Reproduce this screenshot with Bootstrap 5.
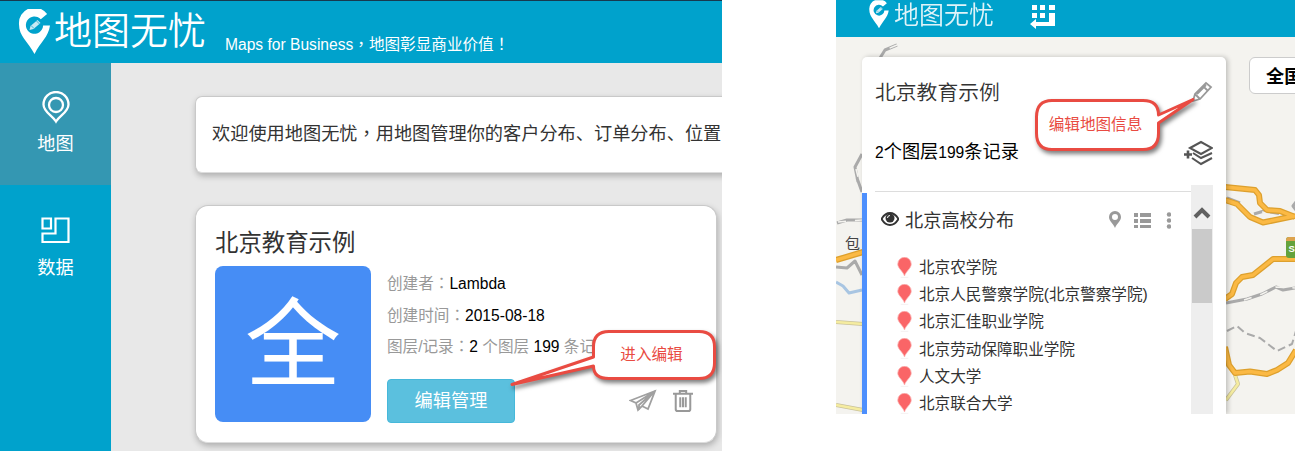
<!DOCTYPE html>
<html lang="zh-CN">
<head>
<meta charset="utf-8">
<meta name="viewport" content="width=device-width, initial-scale=1">
<title>地图无忧</title>
<link rel="stylesheet" href="https://cdn.jsdelivr.net/npm/bootstrap@5.3.0/dist/css/bootstrap.min.css">
<style>
  body { font-family: "Liberation Sans", "Noto Sans CJK SC", sans-serif; font-size: 15.6px; line-height: 1; color: #333; background: #fff; height: 451px; overflow: hidden; }
  svg { display: block; flex: none; }
  .tc { font-family: "Liberation Sans", "Noto Sans CJK TC", sans-serif; }
  .thin { font-weight: 350; }
  .app { width: 722px; height: 451px; background: #e8e8e8; flex: none; }
  .topbar { height: 63px; background: #00a2cc; border-top: 1px solid #17394f; padding-left: 18px; color: #fff; }
  .brand-name { font-size: 38px; line-height: 61px; margin-left: 3px; }
  .slogan { margin: 28px 0 0 19px; line-height: 32px; }
  .side { width: 111px; background: #00a2cc; color: #fff; font-size: 18.2px; flex: none; }
  .side-item { height: 122px; padding-top: 28px; line-height: 24px; }
  .side-item.on { background: #3497b2; }
  .side-item svg { margin-bottom: 8px; }
  .side-item:not(.on) svg { margin-bottom: 5px; }
  .main { padding: 33px 0 0 84px; min-width: 0; }
  .notice, .mapcard { background: #fff; border: 1px solid #c9c9c9; border-bottom-color: #ddd; box-shadow: 1px 3px 6px rgba(0,0,0,.25); }
  .notice { width: 560px; height: 77px; border-radius: 7px; padding-left: 16px; font-size: 18.2px; line-height: 75px; }
  .mapcard { width: 522px; height: 238px; border-radius: 13px; margin-top: 32px; padding: 23px 19px 0; }
  .map-title { font-size: 23.4px; line-height: 28px; margin-bottom: 9px; }
  .thumb { width: 156px; height: 156px; border-radius: 8px; background: #468df5; color: #fff; font-size: 96px; line-height: 158px; flex: none; }
  .meta { color: #999; line-height: 31.5px; padding-top: 2px; }
  .meta b { font-weight: 400; color: #000; }
  .btn-manage { width: 128px; height: 44px; padding: 0; font-size: 18.2px; line-height: 40px; color: #fff; background: #5bc0de; border: 1px solid #46b8da; border-radius: 4px; }
  .callout { left: 0; top: 0; z-index: 5; }
  .callout-text { color: #e94b42; font-size: 15.6px; line-height: 24px; z-index: 6; }
  .c1 { left: 591px; top: 343px; width: 121px; }
  .c2 { left: 199px; top: 113px; width: 121px; }
  .editor { width: 459px; height: 414px; background: #f4f3ef; margin-left: 114px; flex: none; }
  .editbar { height: 37px; background: #00a2cc; color: #fff; padding-left: 33px; }
  .editbar .brand-name { font-size: 25px; line-height: 30px; margin-left: 5px; opacity: .88; }
  .grid-icon { margin-left: 35px; }
  .map-bg { left: 0; top: 0; }
  .layers { width: 364px; height: 357px; margin: 20px 0 0 26px; background: #fff; border-radius: 5px 5px 0 0; box-shadow: 2px 0 5px rgba(0,0,0,.22); flex: none; }
  .layers-head { height: 128px; padding: 20px 13px 0; }
  .layers-title { font-size: 20.8px; line-height: 31px; }
  .count-row { margin-top: 31px; }
  .count { color: #000; font-size: 18.2px; line-height: 26px; }
  .count b { font-weight: 400; font-size: 15.6px; }
  .pane-body { height: 229px; }
  .stripe { width: 5px; margin-top: 8px; background: #4d8ffd; }
  .records { width: 316px; margin: 6px 0 0 8px; border-top: 1px solid #ddd; }
  .layer-row { height: 58px; padding: 0 20px 0 6px; font-size: 18.2px; }
  .layer-row .tools { margin-bottom: 3px; }
  .layer-row .eye { margin-bottom: 4px; }
  .layer-name { margin-left: 6px; }
  .record { height: 27.25px; padding-left: 22px; gap: 7px; white-space: nowrap; }
  .record svg { margin-top: -1px; }
  .scroller { width: 22px; background: #eee; }
  .scroller i { display: block; width: 20px; height: 74px; background: #cacaca; margin: 0 auto; }
  .region { width: 90px; height: 37px; margin: 20px 0 0 23px; border: 1px solid #ccc; border-radius: 6px; background: #fff; color: #000; font-size: 18.2px; font-weight: 700; padding-left: 16px; line-height: 38px; flex: none; }
</style>
</head>
<body>
<svg width="0" height="0" class="position-absolute">
  <symbol id="logo" viewBox="0 0 32 46">
    <path d="M28.600 5.100A15.500 15.500 0 0 0 .5 15.500C.5 27 9 32 16 45 22 33 30 28 31.500 16.500H24.600A8.600 8.600 0 1 1 22.300 10.300Z" fill="#fff"/>
    <path d="M11 21l1-4 7-6 3 3-7 6z" fill="#c7eaf4"/><path d="M12.500 16.500l3 3M18 12l3 3" stroke="#42b7d7"/>
  </symbol>
  <symbol id="drop" viewBox="0 0 16 22">
    <path d="M8 20C6.500 15 .8 12 .8 7.300a7.200 7.200 0 0 1 14.400 0C15.200 12 9.500 15 8 20Z" fill="#fa6567" stroke="#fbb0b0" stroke-width=".8"/><path d="M4 21.500h8" stroke="#f3f0f0"/>
  </symbol>
</svg>
<div class="d-flex align-items-start">
  <section class="app position-relative overflow-hidden d-flex flex-column">
    <header class="topbar d-flex align-items-start">
      <svg width="33" height="46" class="mt-2" viewBox="0 0 32 46"><use href="#logo"/></svg>
      <div class="brand-name thin text-nowrap">地图无忧</div>
      <div class="slogan text-nowrap">Maps for Business<span class="tc" lang="zh-TW">，</span>地图彰显商业价值<span class="tc" lang="zh-TW">！</span></div>
    </header>
    <div class="d-flex flex-grow-1">
      <nav class="side">
        <div class="side-item on d-flex flex-column align-items-center">
          <svg width="28" height="33" viewBox="0 0 28 33" fill="none" stroke="#fff" stroke-width="2.300"><path d="M14 30.500C10 24 1.500 21 1.500 13.500a12.500 12.500 0 0 1 25 0C26.500 21 18 24 14 30.500Z"/><circle cx="14" cy="14" r="7"/></svg>
          <span>地图</span>
        </div>
        <div class="side-item d-flex flex-column align-items-center pt-4">
          <svg width="30" height="38" viewBox="0 0 30 38" fill="none" stroke="#fff" stroke-width="2.200" class="mt-1"><path d="M1.500 5.500h8.500v10h-8.500zM14.500 5.500h13v23.500H1.500v-8.500h13z"/></svg>
          <span>数据</span>
        </div>
      </nav>
      <main class="main">
        <div class="notice text-nowrap">欢迎使用地图无忧<span class="tc" lang="zh-TW">，</span>用地图管理你的客户分布、订单分布、位置</div>
        <article class="mapcard">
          <div class="map-title">北京教育示例</div>
          <div class="d-flex">
            <div class="thumb text-center">全</div>
            <div class="ms-3 flex-grow-1">
              <div class="meta text-nowrap">
                <div>创建者<span class="tc" lang="zh-TW">：</span><b>Lambda</b></div>
                <div>创建时间<span class="tc" lang="zh-TW">：</span><b>2015-08-18</b></div>
                <div>图层/记录<span class="tc" lang="zh-TW">：</span><b>2</b> 个图层 <b>199</b> 条记录</div>
              </div>
              <div class="d-flex align-items-center mt-3">
                <button class="btn btn-manage">编辑管理</button>
                <svg class="ms-auto" width="28" height="24" viewBox="0 0 28 24" fill="none" stroke="#a0a0a0" stroke-width="1.800"><path d="M1.500 11.500 26 2 19 20l-6-3-4 4-2-7zM7 14 26 2 10 16v5M13 17 25 3"/></svg>
                <svg class="ms-3 me-1" width="20" height="24" viewBox="0 0 22 26" fill="none" stroke="#999" stroke-width="2.200"><path d="M0 5h22M7.500 4V2h7v2M3 5v17q0 2 2 2h12q2 0 2-2V5M8 9v11M11 9v11M14 9v11"/></svg>
              </div>
            </div>
          </div>
        </article>
      </main>
    </div>
    <svg class="callout position-absolute" width="722" height="451"><path d="M609 331.500H699Q714.500 331.500 714.500 347V363Q714.500 378.500 699 378.500H609Q593.500 378.500 593.500 366L512 384.500 593.500 357V347Q593.500 331.500 609 331.500Z" fill="#fff" stroke="#e94b42" stroke-width="3" stroke-linejoin="round" style="filter:drop-shadow(2px 3px 2px rgba(0,0,0,.5))"/></svg>
    <div class="callout-text c1 position-absolute text-center">进入编辑</div>
  </section>

  <section class="editor position-relative overflow-hidden">
    <svg class="map-bg position-absolute" width="459" height="414" viewBox="836 0 459 414" fill="none" stroke-linejoin="round">
      <g stroke="#aaa" stroke-width="3"><path d="M880 58 885 50 897 45M862 154 855 167 858 182M857 178 862 192M837 223 847 220 863 220M836 267 847 268 855 261 862 275M1227 198 1240 203M1254 214 1264 211 1288 215M1296 202 1293 206 1296 210"/><path d="M1226 303 1247 299 1262 294 1276 287 1283 290 1295 288"/></g>
      <g stroke="#f4f3ef" stroke-width="1.500" stroke-dasharray="8 9"><path d="M897 45 885 50M856 169 859 181M838 222 862 220M1262 212 1282 215"/><path d="M1244 300 1262 294 1276 287 1295 288"/></g>
      <path d="M1227 331 1237 326 1245 333 1260 338 1277 351 1292 344 1296 331" stroke="#aaa" stroke-width="2" stroke-dasharray="8 4"/>
      <path d="M836 282 843 286 849 293 862 290" stroke="#a8c5e2" stroke-width="3"/>
      <path d="M836 322 863 324M836 405 863 410M1235 375 1238 384 1226 400" stroke="#c9c29b" stroke-width="4"/>
      <path d="M836 322 863 324M836 405 863 410M1235 375 1238 384 1226 400" stroke="#f5eca0" stroke-width="2.500"/>
      <g stroke="#dda02d" stroke-width="6"><path d="M836 260 863 252M1225 187 1255 190 1259 195 1260 203 1267 210 1280 211 1295 217M1225 200 1237 204 1250 217 1263 222.500 1295 216M1296 259H1273L1253 275 1242 277 1236 283 1232 294 1225 299M1225 347 1229 365 1235 373 1250 371.500 1267 374 1277 370 1288 363 1296 350"/></g>
      <g stroke="#fbb944" stroke-width="3.500"><path d="M836 260 863 252M1225 187 1255 190 1259 195 1260 203 1267 210 1280 211 1295 217M1225 200 1237 204 1250 217 1263 222.500 1295 216M1296 259H1273L1253 275 1242 277 1236 283 1232 294 1225 299M1225 347 1229 365 1235 373 1250 371.500 1267 374 1277 370 1288 363 1296 350"/></g>
      <rect x="1286" y="237" width="20" height="21" rx="3" fill="#64a23c"/><path d="M1286 241v-1q0-3 3-3h7v4z" fill="#dda34e"/>
      <text x="1288.500" y="252" font-size="9.500" font-weight="700" fill="#fff">S</text>
      <text x="845" y="249" font-size="15" fill="#444">包</text>
    </svg>
    <header class="editbar position-relative d-flex align-items-start">
      <svg width="20" height="29" viewBox="0 0 32 46"><use href="#logo"/></svg>
      <div class="brand-name thin text-nowrap">地图无忧</div>
      <svg class="grid-icon" width="27" height="30" viewBox="0 0 27 30" fill="#fff"><path d="M3 5h5v5H3zM11 5h5v5h-5zM20 5h6v5h-6zM3 13h5v5H3zM11 13h5v5h-5zM20 13h6v13H7v3l-6-5 6-5v3h13z"/></svg>
    </header>
    <div class="position-relative d-flex align-items-start">
      <div class="layers">
        <div class="layers-head">
          <div class="d-flex justify-content-between">
            <div class="layers-title thin">北京教育示例</div>
            <svg width="22" height="22" viewBox="0 0 22 22" class="mt-1" fill="none" stroke="#999" stroke-width="1.800"><path d="M2 20l2-7L15 2l5 4L9 18zM4 13l5 5M12 5l5 5M6 13 15 4"/></svg>
          </div>
          <div class="count-row d-flex justify-content-between align-items-center">
            <div class="count"><b>2</b>个图层<b>199</b>条记录</div>
            <svg width="29" height="26" viewBox="0 0 29 26" fill="none" stroke="#555" stroke-width="2"><path d="M6 8l11-6 11 6-11 6zM9 13l8 5 11-5M8 18l9 6 11-6"/><path d="M0 14.500h8M4 10.500v8" stroke-width="2.600"/></svg>
          </div>
        </div>
        <div class="pane-body d-flex">
          <div class="stripe"></div>
          <div class="records">
            <div class="layer-row d-flex align-items-center">
              <svg class="eye" width="18" height="16" viewBox="0 0 18 16"><path d="M.5 8Q4 2 9 2t8.500 6Q14 14 9 14T.5 8Z" fill="#fff" stroke="#333" stroke-width="2"/><circle cx="9" cy="7" r="4.500" fill="#333"/><path d="M6.500 7A2.500 2.500 0 0 1 9 4.500" stroke="#fff" fill="none"/></svg>
              <span class="layer-name">北京高校分布</span>
              <svg class="tools ms-auto" width="62" height="18" viewBox="0 0 62 18" fill="#999"><path fill-rule="evenodd" d="M6 17C4 12 0 10 0 6a6 6 0 0 1 12 0c0 4-4 6-6 11ZM6 3a3 3 0 1 0 0 6 3 3 0 0 0 0-6"/><path d="M25 2h4v4h-4zM31 2h11v4H31zM25 8h4v4h-4zM31 8h11v4H31zM25 14h4v3h-4zM31 14h11v3H31z"/><circle cx="60" cy="3.500" r="2.200"/><circle cx="60" cy="9.500" r="2.200"/><circle cx="60" cy="15.500" r="2.200"/></svg>
            </div>
            <div class="pt-1">
            <div class="record d-flex align-items-center"><svg width="15" height="21"><use href="#drop"/></svg>北京农学院</div>
            <div class="record d-flex align-items-center"><svg width="15" height="21"><use href="#drop"/></svg>北京人民警察学院(北京警察学院)</div>
            <div class="record d-flex align-items-center"><svg width="15" height="21"><use href="#drop"/></svg>北京汇佳职业学院</div>
            <div class="record d-flex align-items-center"><svg width="15" height="21"><use href="#drop"/></svg>北京劳动保障职业学院</div>
            <div class="record d-flex align-items-center"><svg width="15" height="21"><use href="#drop"/></svg>人文大学</div>
            <div class="record d-flex align-items-center"><svg width="15" height="21"><use href="#drop"/></svg>北京联合大学</div>
            </div>
          </div>
          <div class="scroller"><svg width="22" height="44" fill="none" stroke="#606060" stroke-width="4"><path d="M4 32l7-7 7 7"/></svg><i></i></div>
        </div>
      </div>
      <div class="region">全国</div>
    </div>
    <svg class="callout position-absolute" width="459" height="414" viewBox="836 0 459 414"><path d="M1052 100.500H1143Q1158.500 100.500 1158.500 115L1193 99.500 1158.500 123V133Q1158.500 149.500 1143 149.500H1052Q1036.500 149.500 1036.500 133V117Q1036.500 100.500 1052 100.500Z" fill="#fff" stroke="#e94b42" stroke-width="3" stroke-linejoin="round" style="filter:drop-shadow(2px 3px 2px rgba(0,0,0,.5))"/></svg>
    <div class="callout-text c2 position-absolute text-center">编辑地图信息</div>
  </section>
</div>
<script src="https://cdn.jsdelivr.net/npm/bootstrap@5.3.0/dist/js/bootstrap.bundle.min.js"></script>
</body>
</html>
